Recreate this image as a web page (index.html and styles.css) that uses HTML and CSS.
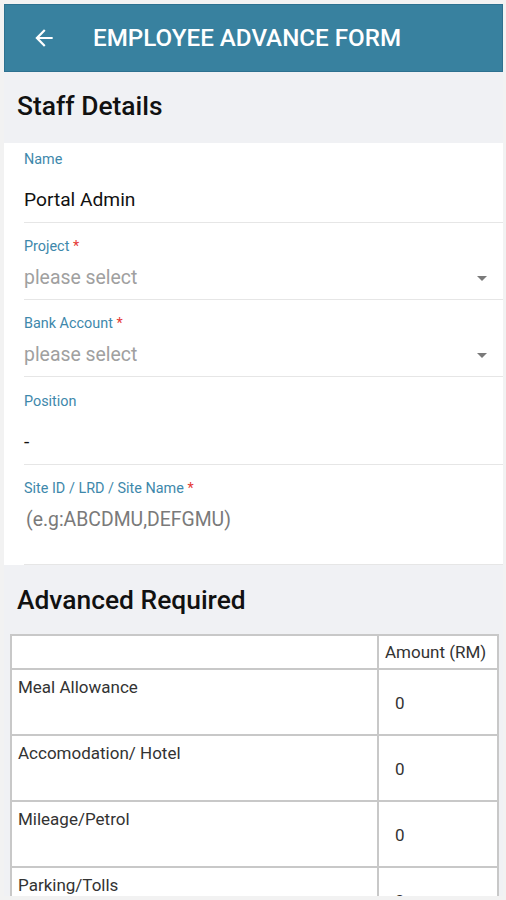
FILE: index.html
```html
<!DOCTYPE html>
<html lang="en">
<head>
<meta charset="utf-8">
<title>Employee Advance Form</title>
<link rel="stylesheet" href="styles.css">
</head>
<body>
<div class="device">
  <div class="screen">
    <header class="appbar">
      <svg class="back" width="26" height="26" viewBox="0 0 24 24"><path d="M20 11H7.83l5.59-5.59L12 4l-8 8 8 8 1.41-1.41L7.83 13H20v-2z" fill="#fff"/></svg>
      <h1 class="title">EMPLOYEE ADVANCE FORM</h1>
    </header>

    <h2 class="section-title staff">Staff Details</h2>

    <div class="card">
      <div class="field first text">
        <div class="label">Name</div>
        <div class="value">Portal Admin</div>
      </div>
      <div class="field select">
        <div class="label">Project <span class="req">*</span></div>
        <div class="value placeholder">please select<span class="caret"></span></div>
      </div>
      <div class="field select">
        <div class="label">Bank Account <span class="req">*</span></div>
        <div class="value placeholder">please select<span class="caret"></span></div>
      </div>
      <div class="field text">
        <div class="label">Position</div>
        <div class="value">-</div>
      </div>
      <div class="field select tall">
        <div class="label">Site ID / LRD / Site Name <span class="req">*</span></div>
        <div class="value hint">(e.g:ABCDMU,DEFGMU)</div>
      </div>
    </div>

    <h2 class="section-title advanced">Advanced Required</h2>

    <table class="amounts">
      <thead>
        <tr><th class="c-item"></th><th class="c-amt">Amount (RM)</th></tr>
      </thead>
      <tbody>
        <tr><td class="c-item">Meal Allowance</td><td class="c-amt">0</td></tr>
        <tr><td class="c-item">Accomodation/ Hotel</td><td class="c-amt">0</td></tr>
        <tr><td class="c-item">Mileage/Petrol</td><td class="c-amt">0</td></tr>
        <tr><td class="c-item">Parking/Tolls</td><td class="c-amt">0</td></tr>
      </tbody>
    </table>
  </div>
</div>
</body>
</html>
```

FILE: styles.css
```css
* { box-sizing: border-box; }
html, body { margin: 0; padding: 0; }
body {
  background: #f4f4f4;
  font-family: Roboto, "Noto Sans", Arial, sans-serif;
}
.device {
  width: 506px;
  height: 900px;
  padding: 4px 3px 4px 4px;
  background: #f2f2f2;
}
.screen {
  height: 100%;
  overflow: hidden;
  background: #f0f1f4;
}
.appbar {
  height: 68px;
  background: #38819f;
  border: 1px solid #2d7190;
  display: flex;
  align-items: center;
  padding-left: 26px;
}
.back { flex: none; }
.title {
  margin: 0 0 0 36px;
  color: #fff;
  font-size: 24.2px;
  font-weight: 500;
}
.section-title {
  margin: 0;
  font-weight: 500;
  color: #111;
  font-size: 26.4px;
  padding-left: 13px;
}
.staff { height: 71px; line-height: 68px; }
.advanced { height: 69px; line-height: 70px; }
.card {
  background: #fff;
  padding-left: 20px;
}
.field {
  border-bottom: 1px solid #e6e6e6;
}
.label {
  font-size: 14.4px;
  line-height: 16px;
  color: #3e88ab;
}
.req { color: #e53935; }
.value {
  font-size: 19.2px;
  line-height: 24px;
  color: #111;
  position: relative;
}
.text { padding: 17px 0 10px; }
.text .value { margin-top: 20px; }
.first { padding-top: 9px; }
.select { padding: 16px 0 9px; }
.select .value { margin-top: 11px; }
.placeholder { color: #a0a0a0; font-size: 19.4px; }
.hint { color: #7a7a7a; padding-left: 2px; font-size: 19.4px; }
.tall { padding-bottom: 32px; }
.caret {
  position: absolute;
  right: 16px;
  top: 10px;
  width: 0;
  height: 0;
  border-left: 5px solid transparent;
  border-right: 5px solid transparent;
  border-top: 5px solid #7a7a7a;
}
.amounts {
  margin-left: 6px;
  width: 489px;
  border-collapse: collapse;
  background: #fff;
  font-size: 17px;
  color: #333;
}
.amounts th, .amounts td {
  border: 2px solid #c8c8c8;
  font-weight: 400;
  text-align: left;
}
.amounts th { height: 34px; padding: 0 6px; }
.amounts .c-item { width: 367px; }
.amounts td { height: 66px; vertical-align: top; }
.amounts td.c-item { padding: 7px 6px; }
.amounts td.c-amt { vertical-align: middle; padding: 2px 16px 0; }
```
